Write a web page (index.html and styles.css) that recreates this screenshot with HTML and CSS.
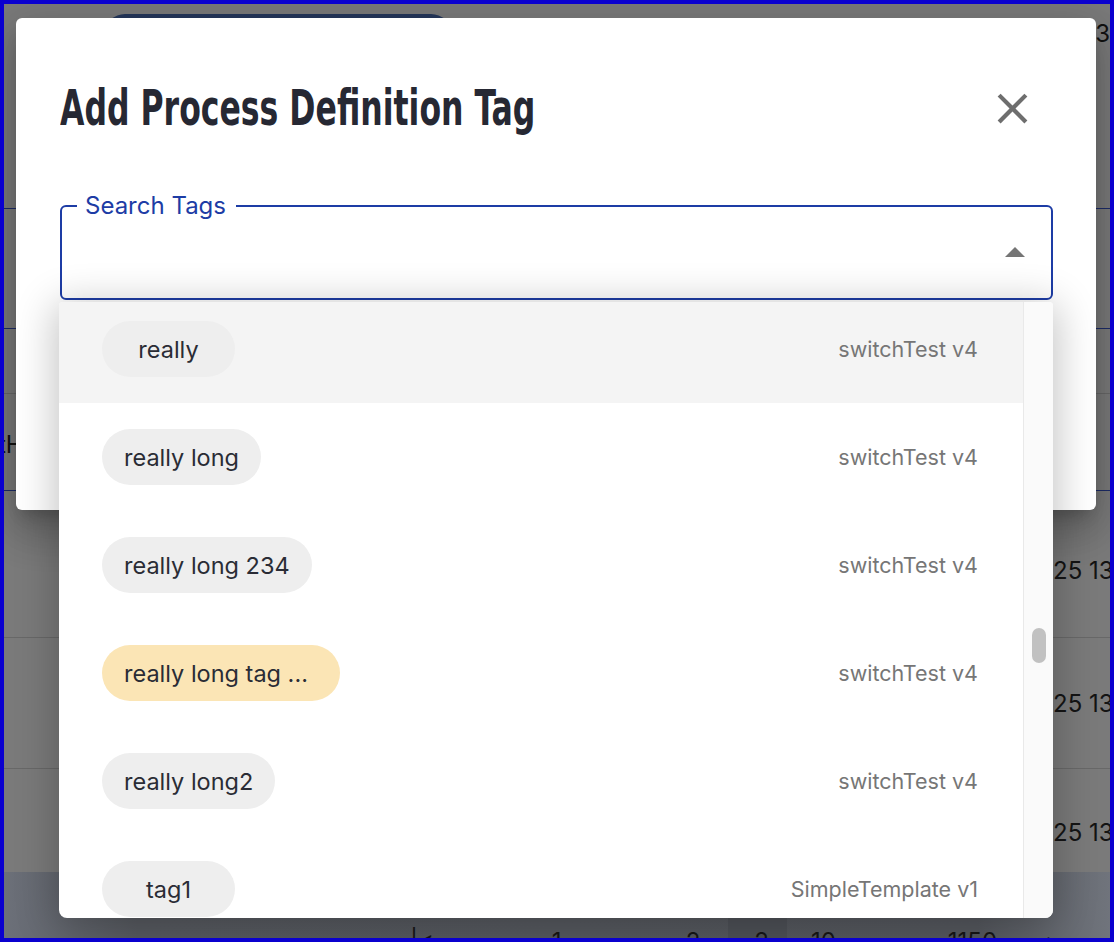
FILE: index.html
```html
<!DOCTYPE html>
<html lang="en">
<head>
    <meta charset="UTF-8">
    <meta name="viewport" content="width=device-width, initial-scale=1.0">
    <title>Add Process Definition Tag</title>
    <link rel="stylesheet" href="styles.css">
</head>
<body>
    <div class="screen">
        <!-- page behind the backdrop -->
        <div class="page">
            <div class="page-head">
                <div class="nav-pill"></div>
                <span class="head-num">3</span>
            </div>
            <div class="row row-a navy"></div>
            <div class="row row-b"></div>
            <div class="row row-c navy"><span class="cell-left">tH</span></div>
            <div class="row row-d"><span class="cell-date">25 13:42:07</span></div>
            <div class="row row-e"><span class="cell-date">25 13:40:51</span></div>
            <div class="row row-f"><span class="cell-date">25 13:38:12</span></div>
            <div class="page-foot">
                <span class="pg pg-first">|&lt;</span>
                <span class="pg pg-1">1</span>
                <span class="pg pg-2">2</span>
                <span class="pg pg-cur">2</span>
                <span class="pg pg-size">10</span>
                <span class="pg pg-total">1150</span>
                <span class="pg pg-next">&gt;</span>
            </div>
        </div>

        <div class="dialog">
            <div class="dialog-head">
                <h2 class="dialog-title">Add Process Definition Tag</h2>
                <button class="close-btn" aria-label="close">
                    <svg width="51" height="51" viewBox="0 0 24 24"><path d="M19 6.41 17.59 5 12 10.59 6.41 5 5 6.41 10.59 12 5 17.59 6.41 19 12 13.41 17.59 19 19 17.59 13.41 12z"/></svg>
                </button>
            </div>

            <div class="field-wrap">
                <fieldset class="field">
                    <legend>Search Tags</legend>
                    <div class="field-row">
                        <svg class="caret" width="48" height="48" viewBox="0 0 24 24"><path d="m7 14 5-5 5 5z"/></svg>
                    </div>
                </fieldset>

                <div class="menu">
                    <ul class="options">
                        <li class="option active"><span class="chip">really</span><span class="meta">switchTest v4</span></li>
                        <li class="option"><span class="chip">really long</span><span class="meta">switchTest v4</span></li>
                        <li class="option"><span class="chip">really long 234</span><span class="meta">switchTest v4</span></li>
                        <li class="option"><span class="chip chip-warn">really long tag ...</span><span class="meta">switchTest v4</span></li>
                        <li class="option"><span class="chip">really long2</span><span class="meta">switchTest v4</span></li>
                        <li class="option"><span class="chip">tag1</span><span class="meta">SimpleTemplate v1</span></li>
                    </ul>
                    <div class="scroll-track"><div class="scroll-thumb"></div></div>
                </div>
            </div>
        </div>
    </div>
</body>
</html>
```

FILE: styles.css
```css
body {
    margin: 0;
    font-family: Inter, "Liberation Sans", sans-serif;
}
.screen {
    position: relative;
    width: 1114px;
    height: 942px;
    box-sizing: border-box;
    border: 4px solid #0a00cf;
    overflow: hidden;
    background: #7a7a7a;
}

/* page under the backdrop */
.page {
    display: flex;
    flex-direction: column;
    height: 100%;
}
.page-head {
    display: flex;
    flex: none;
    height: 205px;
    box-sizing: border-box;
    border-bottom: 1px solid #1d2c68;
}
.nav-pill {
    margin: 10px 0 0 101px;
    width: 350px;
    height: 40px;
    background: #24365b;
    border-radius: 20px;
}
.head-num {
    margin: 15px 0 0 644px;
    font-size: 24px;
    color: #111;
}
.row {
    display: flex;
    flex: none;
    align-items: center;
    box-sizing: border-box;
    border-bottom: 1px solid #686868;
    font-size: 24px;
    color: #141414;
}
.row.navy {
    border-bottom-color: #1d2c68;
}
.row-a { height: 120px; }
.row-b { height: 65px; }
.row-c { height: 97px; }
.row-d { height: 147px; }
.row-e { height: 131px; }
.row-f { height: 103px; border-bottom: none; }
.cell-left {
    margin-left: -6px;
    margin-top: 4px;
}
.cell-date {
    margin-left: 1049px;
    white-space: nowrap;
    margin-top: 12px;
}
.row-e .cell-date { margin-top: 0; }
.row-f .cell-date { margin-top: 24px; }
.page-foot {
    flex: 1;
    min-height: 0;
    overflow: hidden;
    display: flex;
    align-items: flex-start;
    background: linear-gradient(90deg, #6c7079 0, #575a60 12%, #55585e 88%, #70747c 100%);
    font-size: 24px;
    color: #161616;
}
.pg {
    padding-top: 55px;
    padding-bottom: 20px;
    white-space: nowrap;
}
.pg-first { margin-left: 406px; }
.pg-1 { margin-left: 118px; }
.pg-2 { margin-left: 124px; }
.pg-cur {
    margin-left: 28px;
    padding-left: 26px;
    padding-right: 18px;
    background: #4e5157;
}
.pg-size { margin-left: 24px; }
.pg-total { margin-left: 112px; }
.pg-next { margin-left: 48px; }

/* dialog */
.dialog {
    position: absolute;
    left: 12px;
    top: 14px;
    width: 1080px;
    height: 492px;
    box-sizing: border-box;
    padding: 44px 43px 0 44px;
    background: #fff;
    border-radius: 6px;
    box-shadow: 0 11px 15px -7px rgba(0, 0, 0, 0.2), 0 24px 38px 3px rgba(0, 0, 0, 0.14), 0 9px 46px 8px rgba(0, 0, 0, 0.12);
}
.dialog-head {
    display: flex;
    align-items: center;
    justify-content: space-between;
    height: 92px;
}
.dialog-title {
    margin: 0;
    font-family: "DejaVu Sans Condensed", "Liberation Sans", sans-serif;
    font-weight: 700;
    font-size: 49px;
    color: #262833;
    white-space: nowrap;
    transform: scaleX(0.715);
    transform-origin: left center;
}
.close-btn {
    margin-right: 15px;
    padding: 0;
    border: none;
    background: none;
    line-height: 0;
    cursor: pointer;
}
.close-btn svg {
    fill: #6e6e6e;
}

.field-wrap {
    position: relative;
    margin-top: 39px;
}
.field {
    margin: 0;
    height: 107px;
    box-sizing: border-box;
    padding: 0 12px 0 15px;
    border: 2px solid #1d3ca5;
    border-radius: 6px;
}
.field legend {
    padding: 0 10px 0 8px;
    font-size: 24px;
    line-height: 26px;
    color: #1d3ca5;
}
.field-row {
    display: flex;
    justify-content: flex-end;
}
.caret {
    margin-top: 10px;
    fill: #757575;
}

.menu {
    position: absolute;
    top: calc(100% + 2px);
    left: -1px;
    right: 0;
    height: 616px;
    display: flex;
    background: #fff;
    border-radius: 4px 4px 8px 8px;
    overflow: hidden;
    box-shadow: 0 6px 40px 4px rgba(0, 0, 0, 0.24);
}
.options {
    flex: 1;
    list-style: none;
    margin: -7px 0 0;
    padding: 0;
}
.option {
    display: flex;
    align-items: center;
    justify-content: space-between;
    height: 108px;
    padding: 0 45px 0 43px;
}
.option.active {
    background: #f4f4f4;
}
.chip {
    display: inline-flex;
    align-items: center;
    justify-content: center;
    height: 56px;
    min-width: 133px;
    box-sizing: border-box;
    padding: 0 22px;
    border-radius: 28px;
    background: #eeeeee;
    font-size: 23.5px;
    color: #2a2c35;
}
.chip-warn {
    padding-right: 32px;
    background: #fbe5b5;
}
.meta {
    font-size: 21.5px;
    color: #767676;
}
.scroll-track {
    width: 29px;
    background: #fafafa;
    border-left: 1px solid #e9e9e9;
}
.scroll-thumb {
    margin: 326px 0 0 8px;
    width: 14px;
    height: 35px;
    border-radius: 7px;
    background: #c1c1c1;
}
```
